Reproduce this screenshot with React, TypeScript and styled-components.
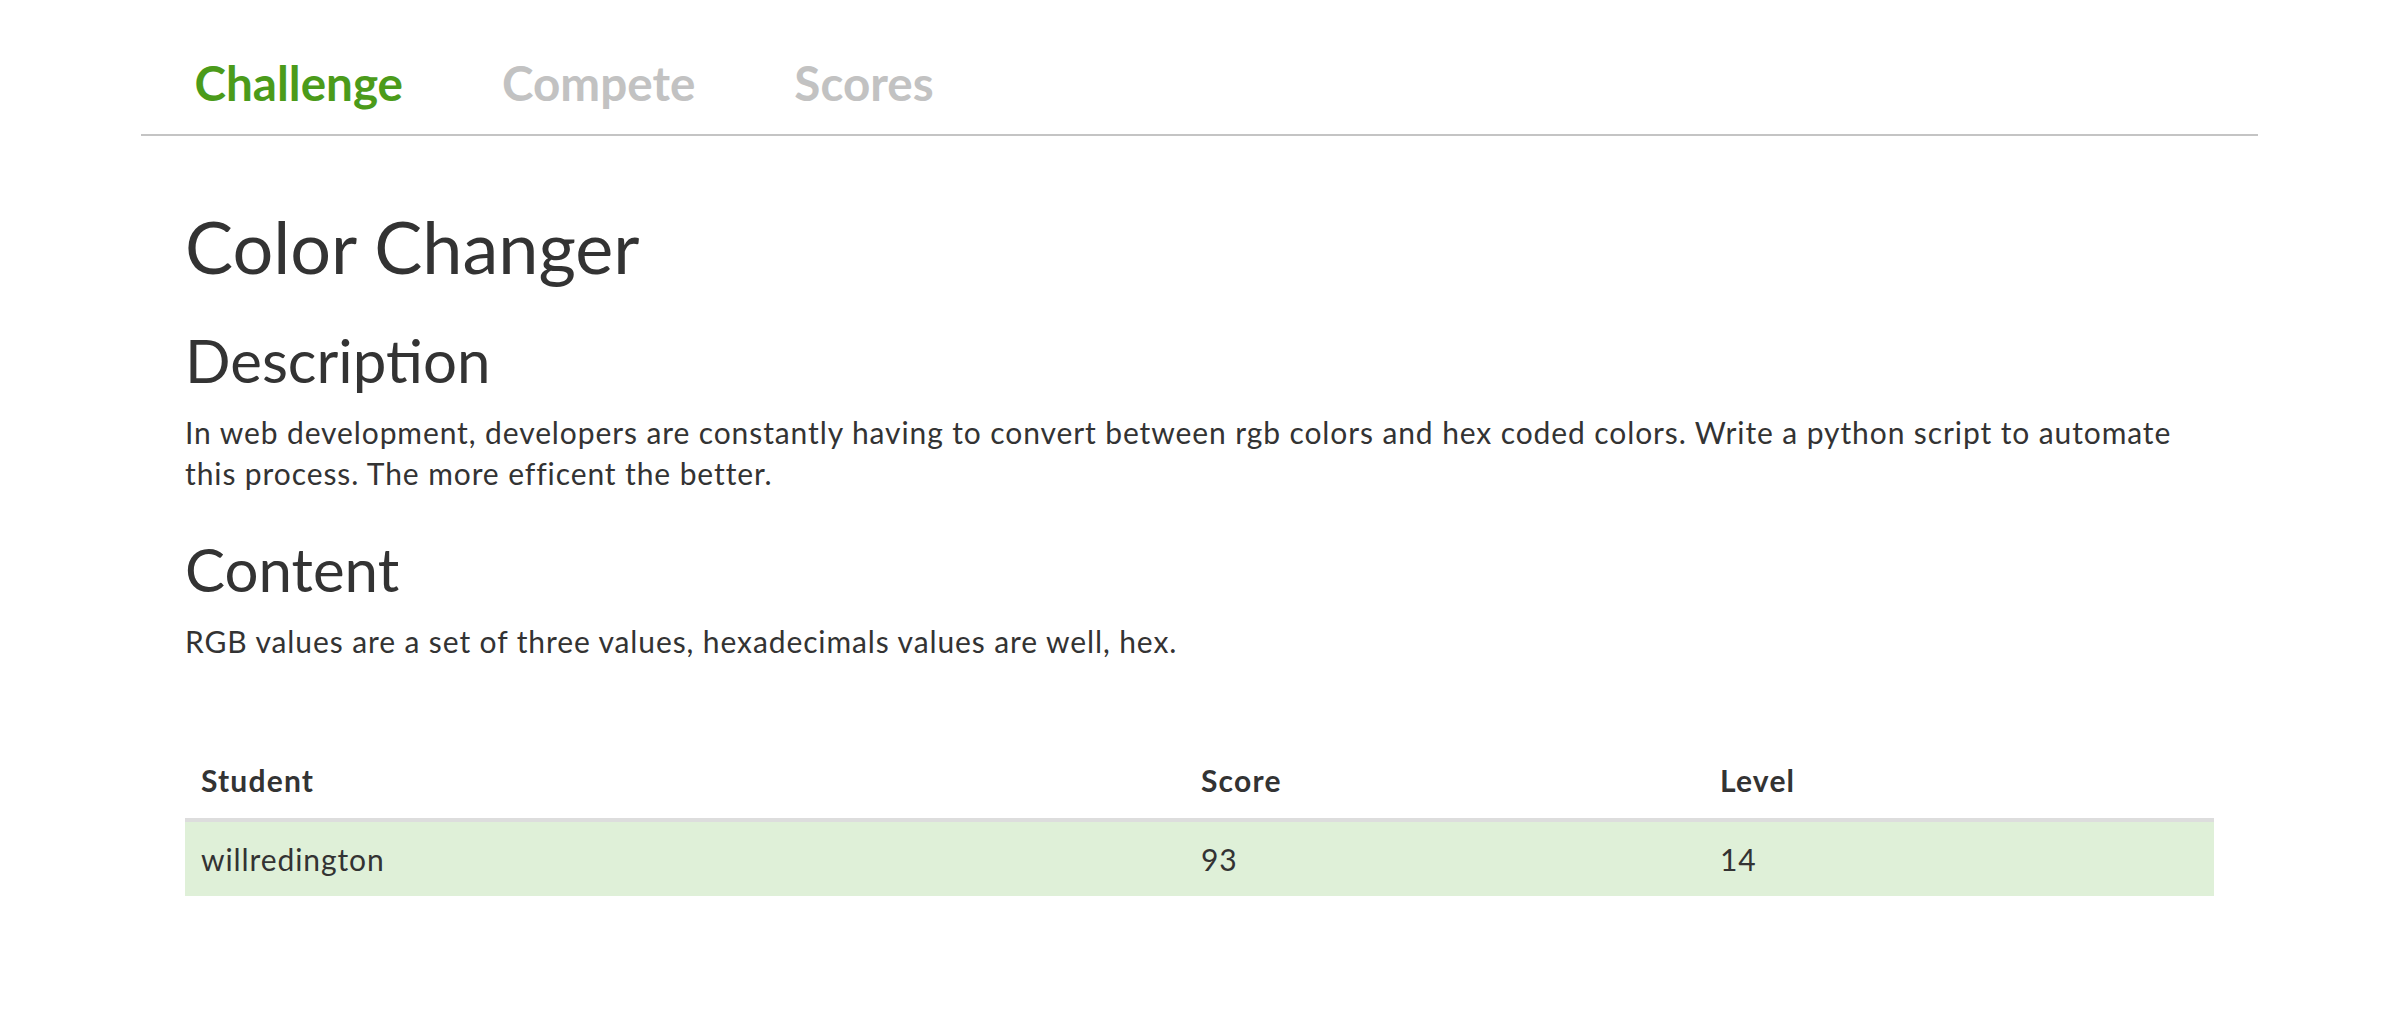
import React from "react";
import styled, { createGlobalStyle } from "styled-components";

const Global = createGlobalStyle`
  html, body { margin: 0; padding: 0; background: #ffffff; }
  body {
    font-family: Lato, "Open Sans", "DejaVu Sans", sans-serif;
    color: #333333;
    font-size: 28px;
    line-height: 41px;
  }
  * { box-sizing: border-box; }
`;

const Page = styled.div`
  margin-left: 141px;
  width: 2117px;
`;

const Tabs = styled.nav`
  display: flex;
  padding-left: 4px;
  border-bottom: 2px solid #c4c4c4;
`;

const Tab = styled.a<{ $active?: boolean }>`
  display: block;
  padding: 57px 49.5px 25px;
  font-size: 47.6px;
  line-height: 52px;
  font-weight: 700;
  text-decoration: none;
  color: ${(p) => (p.$active ? "#4b9b1a" : "#c2c2c2")};
  cursor: pointer;
`;

const Content = styled.main`
  padding: 0 44px;
`;

const Title = styled.h1`
  margin: 70px 0 0;
  font-size: 72px;
  line-height: 80px;
  font-weight: 400;
  color: #333333;
`;

const Heading = styled.h2<{ $gap: number }>`
  margin: ${(p) => p.$gap}px 0 0;
  font-size: 60px;
  line-height: 64px;
  font-weight: 400;
  color: #333333;
`;

const Paragraph = styled.p`
  margin: 20px 0 0;
  font-size: 30px;
  letter-spacing: 0.9px;
  line-height: 41px;
`;

const Table = styled.div`
  margin-top: 82px;
  width: 2029px;
`;

const Row = styled.div<{ $head?: boolean }>`
  display: grid;
  grid-template-columns: 1000px 519px 1fr;
  background: ${(p) => (p.$head ? "transparent" : "#dff0d8")};
  border-bottom: ${(p) => (p.$head ? "4px solid #dddddd" : "none")};
`;

const Cell = styled.div<{ $head?: boolean }>`
  padding: ${(p) => (p.$head ? "16px 16px 18px" : "17px 16px")};
  font-size: 30px;
  letter-spacing: ${(p) => (p.$head ? "1.2px" : "0.9px")};
  line-height: 40px;
  font-weight: ${(p) => (p.$head ? 700 : 400)};
  color: #333333;
`;

const rows = [{ student: "willredington", score: 93, level: 14 }];

export default function App() {
  return (
    <>
      <Global />
      <Page>
        <Tabs>
          <Tab $active>Challenge</Tab>
          <Tab>Compete</Tab>
          <Tab>Scores</Tab>
        </Tabs>
        <Content>
          <Title>Color Changer</Title>
          <Heading $gap={42}>Description</Heading>
          <Paragraph>
            In web development, developers are constantly having to convert between rgb colors and hex coded
            colors. Write a python script to automate this process. The more efficent the better.
          </Paragraph>
          <Heading $gap={43}>Content</Heading>
          <Paragraph>RGB values are a set of three values, hexadecimals values are well, hex.</Paragraph>
          <Table>
            <Row $head>
              <Cell $head>Student</Cell>
              <Cell $head>Score</Cell>
              <Cell $head>Level</Cell>
            </Row>
            {rows.map((r) => (
              <Row key={r.student}>
                <Cell>{r.student}</Cell>
                <Cell>{r.score}</Cell>
                <Cell>{r.level}</Cell>
              </Row>
            ))}
          </Table>
        </Content>
      </Page>
    </>
  );
}
